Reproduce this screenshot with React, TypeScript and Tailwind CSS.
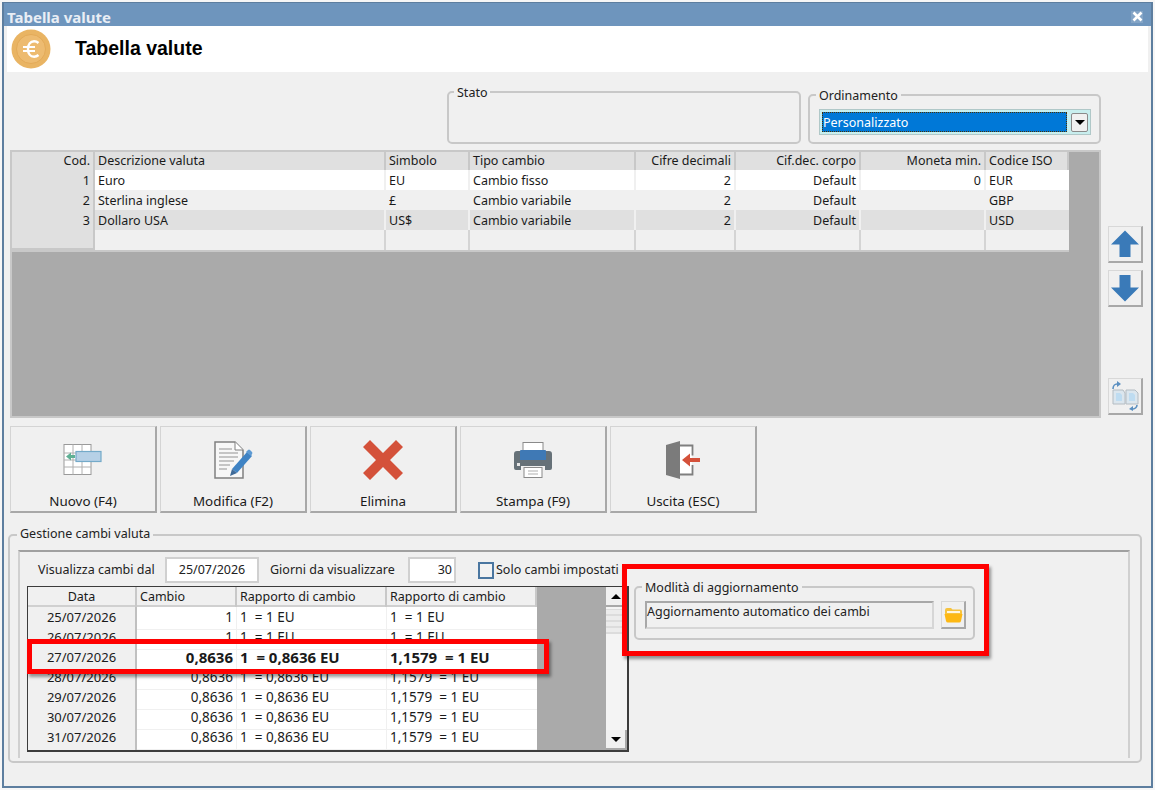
const TAHOMA = "font-['Noto_Sans',_'Liberation_Sans',_sans-serif]";

function Coin() {
  return (
    <svg width="40" height="40" viewBox="0 0 40 40">
      <circle cx="20" cy="20" r="19.5" fill="#e9b463" />
      <circle cx="20" cy="20" r="14.5" fill="#edbb70" stroke="#e3aa58" strokeWidth="1" />
      <path d="M27.5 14c-1.3-1.2-2.8-1.800-4.400-1.800-3.800 0-6.100 3.200-6.100 7.800s2.300 7.800 6.100 7.800c1.600 0 3.100-.6 4.400-1.800" fill="none" stroke="#fff" strokeWidth="2.4" />
      <path d="M12 18h12M12 22h12" stroke="#fff" strokeWidth="2" />
    </svg>
  );
}

function NuovoIcon() {
  return (
    <svg width="40" height="34" viewBox="0 0 40 34">
      <rect x="1" y="1.5" width="27" height="30" fill="#fff" stroke="#9a9a9a" />
      <path d="M1 10h27M1 17h27M1 24h27M10 1.500v30M19 1.500v30" stroke="#b0b0b0" />
      <rect x="13" y="8.5" width="25" height="10" fill="#b6d0e6" stroke="#74aac9" strokeWidth="1.2" />
      <path d="M3 13.5l5-4v2.500h4v3h-4v2.500z" fill="#5fb094" />
    </svg>
  );
}

function ModificaIcon() {
  return (
    <svg width="40" height="38" viewBox="0 0 40 38">
      <path d="M2 1h20l8 8v28H2z" fill="#f7f7f7" stroke="#808080" strokeWidth="1.5" />
      <path d="M22 1v8h8" fill="#fff" stroke="#808080" />
      <path d="M6 8h13M6 12h19M6 16h19M6 20h15M6 24h11M6 28h8" stroke="#b5b5b5" strokeWidth="1.4" />
      <path d="M19 28l15-17 5 4-15 17z" fill="#3f83c4" />
      <path d="M33 11l2-2a1.500 1.500 0 0 1 2 0l2 2a1.500 1.500 0 0 1 0 2l-1 2z" fill="#5d9ad3" />
      <path d="M19 28l5 4-7 3z" fill="#3f6a98" />
    </svg>
  );
}

function EliminaIcon() {
  return (
    <svg width="40" height="40" viewBox="0 0 40 40">
      <path d="M7 0L20 13L33 0L40 7L27 20L40 33L33 40L20 27L7 40L0 33L13 20L0 7z" fill="#d4513a" />
    </svg>
  );
}

function StampaIcon() {
  return (
    <svg width="38" height="36" viewBox="0 0 38 36">
      <rect x="9" y="0.5" width="20" height="11" fill="#fff" stroke="#8a8a8a" />
      <path d="M3 9h32a3 3 0 0 1 3 3v14a2 2 0 0 1-2 2h-5v-4H7v4H2a2 2 0 0 1-2-2V12a3 3 0 0 1 3-3z" fill="#667178" />
      <path d="M7 8h24a1 1 0 0 1 1 1v9H6V9a1 1 0 0 1 1-1z" fill="#3f79b5" />
      <rect x="10" y="25.5" width="18" height="10" fill="#fff" stroke="#8a8a8a" />
      <path d="M14 29h10M14 32h10" stroke="#b0b0b0" strokeWidth="1.2" />
      <rect x="3" y="21" width="3" height="3" fill="#e8e8e8" />
    </svg>
  );
}

function UscitaIcon() {
  return (
    <svg width="34" height="38" viewBox="0 0 34 38">
      <rect x="13" y="5" width="13" height="29" fill="#fff" />
      <path d="M12 4.500h14.500v10M26.500 24v9.500H12" fill="none" stroke="#7f7f7f" strokeWidth="1.8" />
      <path d="M0 4l14-4v38L0 34z" fill="#7b7b7b" />
      <path d="M16 19l8-6.500v4.500h10v4H24v4.500z" fill="#d4513a" />
    </svg>
  );
}

function ArrowIcon({ up }: { up: boolean }) {
  return (
    <svg width="30" height="30" viewBox="0 0 30 30">
      {up ? (
        <path d="M15 1.500L29 15.500H20.500V28H9.500V15.500H1z" fill="#3a7ab8" />
      ) : (
        <path d="M15 28.500L29 14.500H20.500V2H9.500V14.500H1z" fill="#3a7ab8" />
      )}
    </svg>
  );
}

function SwapIcon() {
  return (
    <svg width="30" height="30" viewBox="0 0 30 30">
      <path d="M3 9h10l2 3v11H3zM16 9h9l3 3v11H16z" fill="#dbe6ee" stroke="#b4bcc2" />
      <path d="M6 12h4l2 2v6H6zM19 12h4l2 2v6h-6z" fill="#bedcf1" />
      <path d="M3 8c0-3 2-5 4-5" fill="none" stroke="#5a8fc0" strokeWidth="1.6" />
      <path d="M7 0l4 3-4 3z" fill="#5a8fc0" />
      <path d="M27 24c0 2-2 4-4 4" fill="none" stroke="#5a8fc0" strokeWidth="1.6" />
      <path d="M23 25l-4 3 4 2z" fill="#5a8fc0" />
    </svg>
  );
}

function FolderIcon() {
  return (
    <svg width="19" height="16" viewBox="0 0 19 16">
      <path d="M1 3a2 2 0 0 1 2-2h4l1.500 1.500H16a2 2 0 0 1 2 2V8H1z" fill="#f6c33f" />
      <path d="M3 4h13v2H3z" fill="#fff6df" />
      <path d="M0.500 7h18l-1.500 7a2 2 0 0 1-2 1.500H4A2 2 0 0 1 2 14z" fill="#fdb813" />
    </svg>
  );
}

function Caret({ up }: { up: boolean }) {
  return (
    <span
      className={`block h-0 w-0 border-x-[5px] border-x-transparent ${up ? "border-b-[5px] border-b-black" : "border-t-[5px] border-t-black"}`}
    />
  );
}

function ToolButton({ label, icon }: { label: string; icon: React.ReactNode }) {
  return (
    <div className="flex h-[87px] w-[147px] flex-col items-center border border-[#d4d4d4] border-r-2 border-b-2 border-r-[#a8a8a8] border-b-[#a8a8a8] bg-[#f0f0f0]">
      <div className="flex h-[58px] items-center justify-center pt-[8px]">{icon}</div>
      <div className="mt-[8px] text-[13.4px] leading-[17px] text-[#1a1a1a]">{label}</div>
    </div>
  );
}

function SideButton({ children, className = "" }: { children: React.ReactNode; className?: string }) {
  return (
    <div className={`flex h-[37px] w-[35px] items-center justify-center border border-[#d8d8d8] border-r-2 border-b-2 border-r-[#a8a8a8] border-b-[#a8a8a8] ${className}`}>
      {children}
    </div>
  );
}

const topCols = "grid grid-cols-[83px_291px_84px_166px_100px_125px_125px_83px]";
const topHead = ["Cod.", "Descrizione valuta", "Simbolo", "Tipo cambio", "Cifre decimali", "Cif.dec. corpo", "Moneta min.", "Codice ISO"];
const topRows = [
  { bg: "bg-white", sep: "border-[#f0f0f0]", cells: ["1", "Euro", "EU", "Cambio fisso", "2", "Default", "0", "EUR"] },
  { bg: "bg-[#f0f0f0]", sep: "border-[#f0f0f0]", cells: ["2", "Sterlina inglese", "£", "Cambio variabile", "2", "Default", "", "GBP"] },
  { bg: "bg-[#e0e0e0]", sep: "border-[#f0f0f0]", cells: ["3", "Dollaro USA", "US$", "Cambio variabile", "2", "Default", "", "USD"] },
  { bg: "bg-[#f0f0f0]", sep: "border-[#d4d4d4]", cells: ["", "", "", "", "", "", "", ""] },
];
const topRight = [true, false, false, false, true, true, true, false];

function TopGrid() {
  return (
    <div className="h-[268px] w-[1091px] border-2 border-[#c8c8c8] bg-[#aaaaaa]">
      <div className="w-[1057px] text-[12.5px] text-[#1a1a1a]">
        <div className={`${topCols} h-[18px] bg-[#e0e0e0]`}>
          {topHead.map((h, i) => (
            <div key={h} className={`h-full border-r-2 border-[#c8c8c8] px-[3px] leading-[18px] ${topRight[i] ? "text-right" : ""}`}>
              {h}
            </div>
          ))}
        </div>
        {topRows.map((r, ri) => (
          <div key={ri} className={`${topCols} h-[20px] ${r.bg}`}>
            {r.cells.map((c, i) => (
              <div
                key={i}
                className={`h-full px-[3px] leading-[22px] ${topRight[i] ? "text-right" : ""} ${i === 0 ? "border-r-2 border-b-2 border-[#c8c8c8] bg-[#e0e0e0]" : i < 7 ? `border-r-2 ${r.sep}` : ""}`}
              >
                {c}
              </div>
            ))}
          </div>
        ))}
        <div className="h-[2px] bg-[#c8c8c8]" />
      </div>
    </div>
  );
}

const lowCols = "grid grid-cols-[109px_100px_150px_150px]";
const lowRows: [string, string, string, string, boolean][] = [
  ["25/07/2026", "1", "1  = 1 EU", "1  = 1 EU", false],
  ["26/07/2026", "1", "1  = 1 EU", "1  = 1 EU", false],
  ["27/07/2026", "0,8636", "1  = 0,8636 EU", "1,1579  = 1 EU", true],
  ["28/07/2026", "0,8636", "1  = 0,8636 EU", "1,1579  = 1 EU", false],
  ["29/07/2026", "0,8636", "1  = 0,8636 EU", "1,1579  = 1 EU", false],
  ["30/07/2026", "0,8636", "1  = 0,8636 EU", "1,1579  = 1 EU", false],
  ["31/07/2026", "0,8636", "1  = 0,8636 EU", "1,1579  = 1 EU", false],
];

function LowGrid() {
  return (
    <div className="flex h-[166px] w-[602px] border border-[#3c3c3c] border-b-2 border-r-2 bg-[#aaaaaa]">
      <div className="h-full w-[509px] overflow-hidden bg-white text-[12.5px] text-[#1a1a1a]">
        <div className={`${lowCols} h-[20px] border-b-2 border-[#d0d0d0] bg-[#f0f0f0]`}>
          <div className="border-r-2 border-[#c8c8c8] text-center leading-[20px]">Data</div>
          <div className="border-r-2 border-[#c8c8c8] px-[3px] leading-[20px]">Cambio</div>
          <div className="border-r-2 border-[#c8c8c8] px-[3px] leading-[20px]">Rapporto di cambio</div>
          <div className="border-r-2 border-[#c8c8c8] px-[3px] leading-[20px]">Rapporto di cambio</div>
        </div>
        {lowRows.map((r) => (
          <div key={r[0]} className={`${lowCols} h-[20px] ${r[4] ? "text-[15px] font-bold" : "text-[13.5px]"}`}>
            <div className="border-r-2 border-b-2 border-[#c0c0c0] bg-[#f0f0f0] text-center text-[13px] font-normal leading-[21px]">{r[0]}</div>
            <div className="border-r border-b border-[#f0f0f0] px-[3px] text-right leading-[20px]">{r[1]}</div>
            <div className="border-r border-b border-[#f0f0f0] px-[3px] leading-[20px] whitespace-pre">{r[2]}</div>
            <div className="border-b border-[#f0f0f0] px-[3px] leading-[20px] whitespace-pre">{r[3]}</div>
          </div>
        ))}
        <div className={`${lowCols} h-[4px]`}>
          <div className="border-r-2 border-[#c0c0c0] bg-[#f0f0f0]" />
        </div>
      </div>
      <div className="w-[69px]" />
      <div className="flex w-[21px] flex-col bg-[#f4f4f4]">
        <div className="flex h-[20px] items-center justify-center border-r-2 border-b-2 border-[#a8a8a8] bg-[#f0f0f0]">
          <Caret up={true} />
        </div>
        <div className="mt-[2px] h-[25px] bg-[repeating-linear-gradient(0deg,#dcdcdc,#dcdcdc_2px,#ececec_2px,#ececec_6px)]" />
        <div className="flex-1" />
        <div className="flex h-[20px] items-center justify-center border-r-2 border-b-2 border-[#a8a8a8] bg-[#f0f0f0]">
          <Caret up={false} />
        </div>
      </div>
    </div>
  );
}

function RedBox({ className }: { className: string }) {
  return <div className={`pointer-events-none absolute border-[5px] border-[#ff0000] shadow-[2px_3px_3px_rgba(0,0,0,0.4)] ${className}`} />;
}

export default function App() {
  return (
    <div className={`relative h-[790px] w-[1155px] overflow-hidden bg-[#f6f6f6] ${TAHOMA}`}>
      <div className="ml-[2px] mt-[2px] flex h-[786px] w-[1151px] flex-col border-2 border-t-[1px] border-[#5d7e9f] bg-[#6e95bd]">
        {/* title bar */}
        <div className="flex h-[23px] shrink-0 items-center justify-between pl-[3px] pr-[8px] pt-[4px]">
          <span className="text-[15px] font-bold leading-[20px] text-[#e9eef5]">Tabella valute</span>
          <span className="flex h-[12px] w-[12px] items-center justify-center bg-white/15">
            <svg width="11" height="11" viewBox="0 0 11 11">
              <path d="M1.500 1.500l8 8M9.500 1.500l-8 8" stroke="#fff" strokeWidth="2.6" />
            </svg>
          </span>
        </div>
        {/* client area */}
        <div className="flex min-h-0 flex-1 flex-col bg-[#f0f0f0]">
          <div className="mx-[3px] flex h-[46px] shrink-0 items-center bg-white pb-[1px]">
            <div className="ml-[4px] w-[64px]">
              <Coin />
            </div>
            <span className="font-['Liberation_Sans',_sans-serif] text-[19.5px] font-bold text-black">Tabella valute</span>
          </div>

          {/* stato + ordinamento */}
          <div className="relative h-[78px] shrink-0">
            <div className="absolute left-[443px] top-[19px] h-[53px] w-[354px] rounded-[5px] border-2 border-[#c8c8c8]">
              <span className="absolute left-[5px] top-[-8px] bg-[#f0f0f0] px-[3px] text-[12.5px] leading-[16px] text-[#222]">Stato</span>
            </div>
            <div className="absolute left-[804px] top-[22px] flex h-[50px] w-[293px] items-center rounded-[5px] border-2 border-[#c8c8c8] pl-[9px]">
              <span className="absolute left-[6px] top-[-8px] bg-[#f0f0f0] px-[3px] text-[12.5px] leading-[16px] text-[#222]">Ordinamento</span>
              <div className="mt-[6px] flex h-[26px] w-[272px] items-center border border-[#b0c8c8] bg-[#c8eeee] p-[2px]">
                <div className="h-[20px] flex-1 border border-dotted border-[#4a3000] bg-[#0078d7] text-[12.5px] leading-[19px] text-white">Personalizzato</div>
                <div className="ml-[4px] flex h-[19px] w-[17px] items-center justify-center rounded-[2px] border border-[#8a8a8a] bg-[#f0f0f0]">
                  <Caret up={false} />
                </div>
              </div>
            </div>
          </div>

          {/* main grid and side buttons */}
          <div className="flex h-[268px] shrink-0 pl-[6px]">
            <TopGrid />
            <div className="ml-[7px] flex w-[35px] flex-col">
              <SideButton className="mt-[76px]"><ArrowIcon up={true} /></SideButton>
              <SideButton className="mt-[7px]"><ArrowIcon up={false} /></SideButton>
              <SideButton className="mt-[71px]"><SwapIcon /></SideButton>
            </div>
          </div>

          {/* toolbar */}
          <div className="mt-[8px] flex h-[87px] shrink-0 gap-[3px] pl-[6px]">
            <ToolButton label="Nuovo (F4)" icon={<NuovoIcon />} />
            <ToolButton label="Modifica (F2)" icon={<ModificaIcon />} />
            <ToolButton label="Elimina" icon={<EliminaIcon />} />
            <ToolButton label="Stampa (F9)" icon={<StampaIcon />} />
            <ToolButton label="Uscita (ESC)" icon={<UscitaIcon />} />
          </div>

          {/* gestione */}
          <div className="relative ml-[4px] mt-[21px] h-[229px] w-[1134px] shrink-0 rounded-[5px] border-2 border-[#c8c8c8] px-[8px] pt-[14px]">
            <span className="absolute left-[7px] top-[-10px] bg-[#f0f0f0] px-[3px] text-[12.5px] leading-[16px] text-[#222]">Gestione cambi valuta</span>
            <div className="h-[208px] w-[1112px] border-2 border-b-0 border-[#d0d0d0] border-t-[#a0a0a0] pl-[7px] pt-[5px] text-[12.5px] text-[#222]">
              <div className="flex h-[26px] items-center">
                <span className="ml-[11px] mt-[1px] w-[127px]">Visualizza cambi dal</span>
                <div className="h-[26px] w-[94px] border-2 border-[#d0d0d0] bg-white text-center leading-[21px]">25/07/2026</div>
                <span className="ml-[11px] mt-[1px] w-[138px]">Giorni da visualizzare</span>
                <div className="h-[26px] w-[48px] border-2 border-[#d0d0d0] bg-white px-[2px] text-right leading-[21px]">30</div>
                <span className="ml-[22px] h-[17px] w-[16px] border-2 border-[#4a76a0] bg-[#f2f2f2]" />
                <span className="ml-[2px] mt-[1px]">Solo cambi impostati</span>
              </div>
              <div className="mt-[3px] flex">
                <LowGrid />
                <div className="relative ml-[5px] h-[54px] w-[341px] rounded-[5px] border-2 border-[#c8c8c8]">
                  <span className="absolute left-[6px] top-[-8px] bg-[#f0f0f0] px-[3px] leading-[16px]">Modlità di aggiornamento</span>
                  <div className="ml-[9px] mt-[13px] flex">
                    <div className="h-[28px] w-[289px] border-2 border-[#d6d6d6] border-t-[#a8a8a8] border-l-[#a8a8a8] leading-[18px]">Aggiornamento automatico dei cambi</div>
                    <div className="ml-[7px] flex h-[28px] w-[25px] items-center justify-center border border-[#d8d8d8] border-r-2 border-b-2 border-r-[#a8a8a8] border-b-[#a8a8a8]">
                      <FolderIcon />
                    </div>
                  </div>
                </div>
              </div>
            </div>
          </div>
        </div>
      </div>
      <RedBox className="left-[27px] top-[639px] h-[35px] w-[522px]" />
      <RedBox className="left-[622px] top-[564px] h-[92px] w-[367px]" />
    </div>
  );
}
